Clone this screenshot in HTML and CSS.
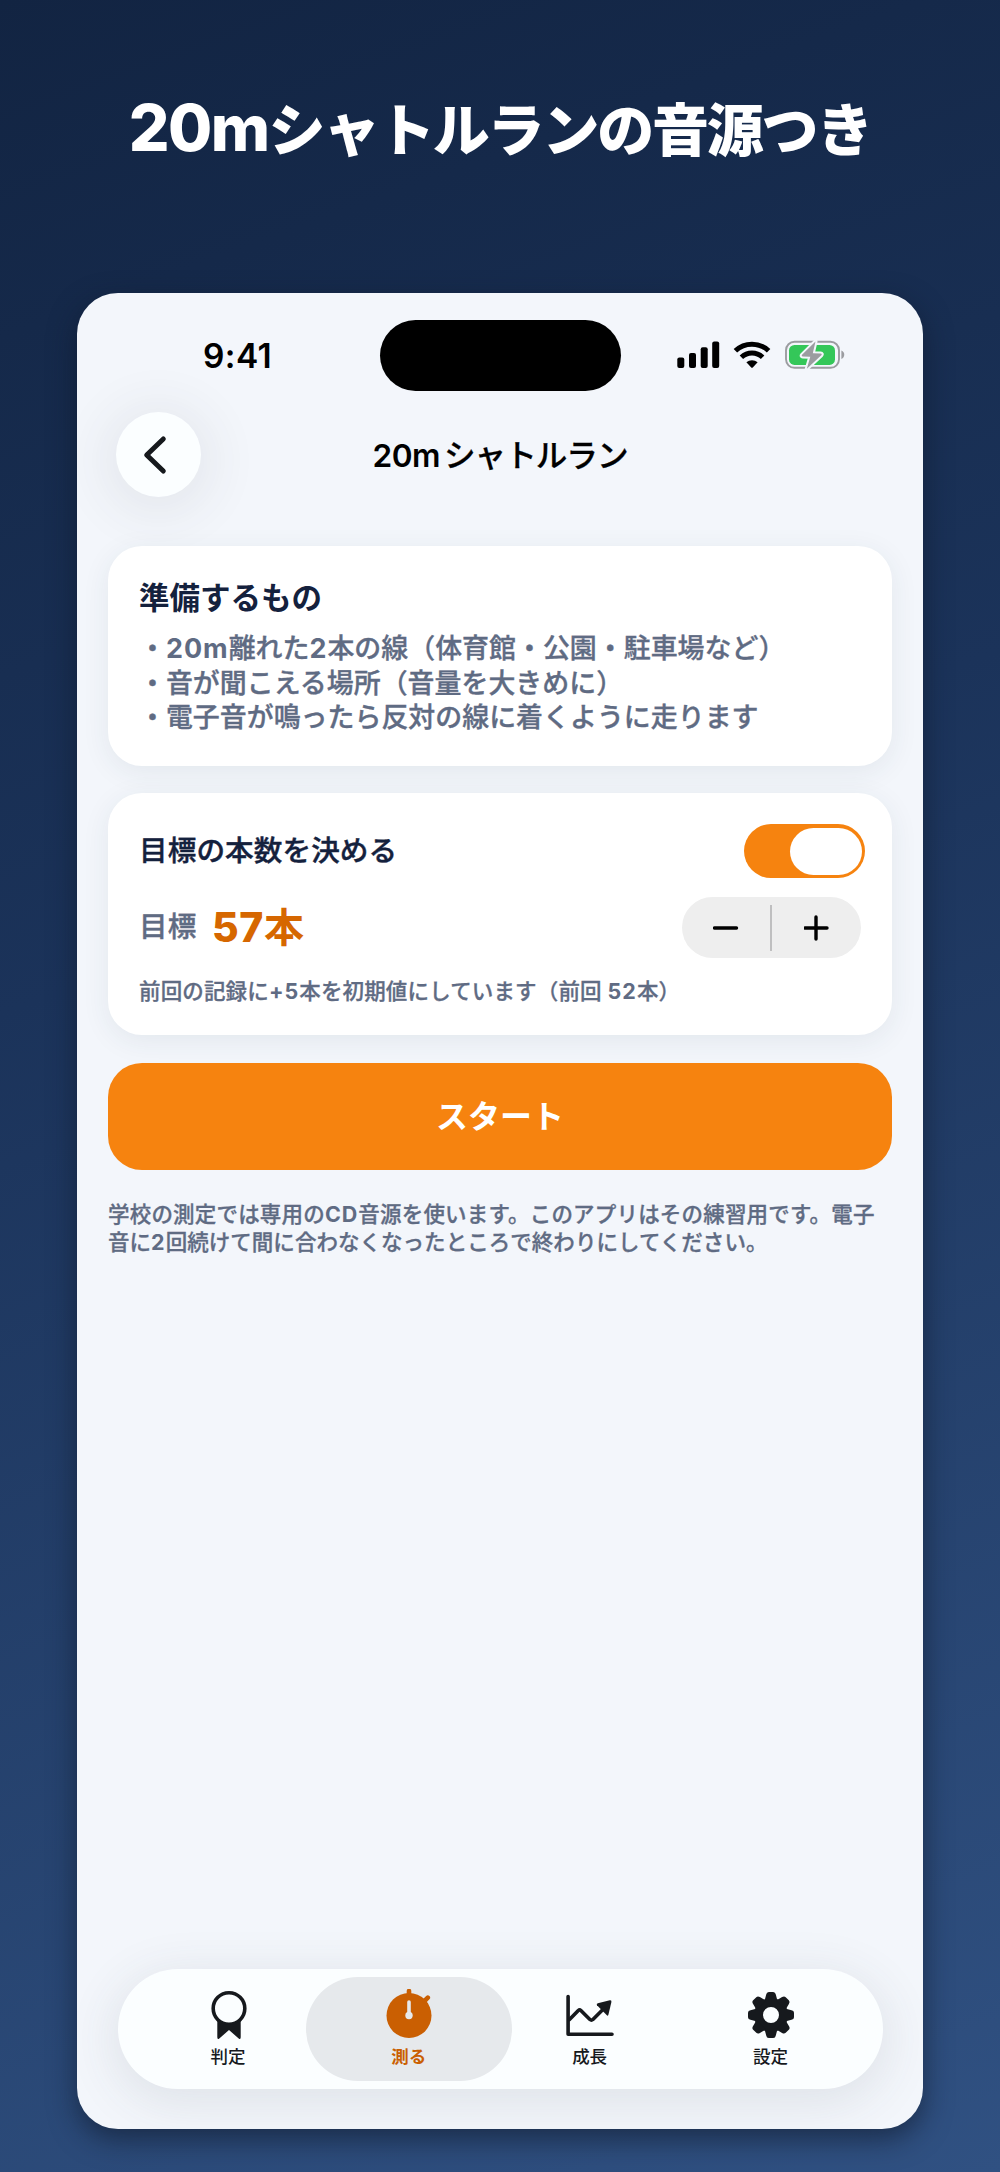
FILE: index.html
```html
<!DOCTYPE html>
<html lang="ja">
<head>
<meta charset="utf-8">
<title>20mシャトルラン</title>
<link rel="stylesheet" href="styles.css">
</head>
<body>
<main class="poster">
  <h1 class="headline"><span class="headline-latin">20m</span>シャトルランの音源つき</h1>
  <section class="screen">
    <div class="status">
      <div class="time">9:41</div>
      <div class="island"></div>
      <svg class="indicators" width="170" height="30" viewBox="0 0 170 30">
        <rect x="0.3" y="17.6" width="7" height="10.4" rx="2"/>
        <rect x="12" y="13" width="7" height="15" rx="2"/>
        <rect x="23.7" y="7.3" width="7" height="20.7" rx="2"/>
        <rect x="35.2" y="1.5" width="7" height="26.5" rx="2"/>
        <g fill="none" stroke="#000" stroke-width="5">
          <path d="M58.4 10.8a24 24 0 0 1 33.2 0"/>
          <path d="M64.4 17.3a15.4 15.4 0 0 1 21.2 0"/>
        </g>
        <path d="M69.4 22.3a8.4 8.4 0 0 1 11.2 0L75.8 27.4q-.8.8-1.6 0z"/>
        <rect x="109" y="1.8" width="53" height="26" rx="8.5" fill="none" stroke="#9b9ca0" stroke-width="1.9"/>
        <path d="M164.4 10.6c3.8 1.2 3.8 7.2 0 8.4z" fill="#9b9ca0"/>
        <rect x="112" y="4.9" width="46" height="20" rx="5.5" fill="#34c759"/>
        <path d="M138.5 1.5L125 14.8q-1 1.5.8 1.7l7.5.3-3.5 12 14.5-13.5q1.3-1.6-.8-1.8l-7.7-.3z" fill="#9b9ca0" stroke="#f3f6fb" stroke-width="4" paint-order="stroke" stroke-linejoin="round"/>
      </svg>
    </div>
    <header class="nav">
      <div class="back"><svg width="30" height="44" viewBox="0 0 30 44"><path d="M20.3 6L3.7 22l16.6 16" fill="none" stroke="#16191d" stroke-width="5" stroke-linecap="round" stroke-linejoin="round"/></svg></div>
      <h2 class="nav-title"><span class="nav-latin">20m</span>シャトルラン</h2>
    </header>
    <div class="content">
      <article class="card prep">
        <h3 class="prep-title">準備するもの</h3>
        <ul class="prep-list">
          <li>・<span class="latin">20m</span>離れた<span class="latin">2</span>本の線（体育館・公園・駐車場など）</li>
          <li>・音が聞こえる場所（音量を大きめに）</li>
          <li>・電子音が鳴ったら反対の線に着くように走ります</li>
        </ul>
      </article>
      <article class="card goal">
        <div class="row toggle-row">
          <span class="toggle-label">目標の本数を決める</span>
          <span class="toggle"><span class="knob"></span></span>
        </div>
        <div class="row value-row">
          <span class="value-label">目標</span>
          <span class="value"><span class="value-num">57</span>本</span>
          <span class="stepper">
            <svg width="26" height="26" viewBox="0 0 26 26"><path d="M1.5 13h22"/></svg>
            <span class="divider"></span>
            <svg width="26" height="26" viewBox="0 0 26 26"><path d="M1 13h22M12 2v22"/></svg>
          </span>
        </div>
        <p class="note">前回の記録に<span class="latin">+5</span>本を初期値にしています（前回 <span class="latin">52</span>本）</p>
      </article>
      <div class="start">スタート</div>
      <p class="footnote"><span class="footnote-line">学校の測定では専用の<span class="latin">CD</span>音源を使います。このアプリはその練習用です。電子</span><br>音に<span class="latin">2</span>回続けて間に合わなくなったところで終わりにしてください。</p>
    </div>
    <nav class="tabs">
      <div class="tab">
        <svg width="50" height="52" viewBox="0 0 50 52"><circle cx="26" cy="19.5" r="15.8" fill="none" stroke="#16191d" stroke-width="3.6"/><path d="M14.3 31.5q11.700 8.500 23.400 0v16.800q0 2.700-2 1.200L26 41l-9.700 8.500q-2 1.500-2-1.200z"/></svg>
        <span>判定</span>
      </div>
      <div class="tab active">
        <svg width="50" height="52" viewBox="0 0 50 52"><circle cx="25" cy="26.5" r="22.5"/><path d="M25 2v6M40.500 12l3.300-3.300" stroke="#ca5f02" stroke-width="4.600" stroke-linecap="round"/><path d="M25 13v11" stroke="#e6e9ec" stroke-width="3.600" stroke-linecap="round"/><circle cx="25" cy="26.500" r="3.700" fill="#e6e9ec"/></svg>
        <span>測る</span>
      </div>
      <div class="tab">
        <svg width="50" height="52" viewBox="0 0 50 52"><g fill="none" stroke="#16191d" stroke-width="3.600" stroke-linecap="round" stroke-linejoin="round"><path d="M3.100 7.500v37.800h43.900"/><path d="M4.500 30.500l8.800-9q1.300-1.200 2.600 0l9 9q1.500 1.300 3 0l12-12"/></g><path d="M32 16.200q-.9-1.500.8-2L44.800 11.300q2-.4 1.600 1.600l-3 12.900q-.6 1.500-1.800.3z"/></svg>
        <span>成長</span>
      </div>
      <div class="tab">
        <svg width="50" height="52" viewBox="0 0 50 52"><defs><path id="tooth" d="M19.500 12L21.200 5.500Q21.600 3 23.800 3H28.200Q30.400 3 30.800 5.500L32.500 12z"/></defs><circle cx="26" cy="26" r="12.500" fill="none" stroke="#16191d" stroke-width="9"/><use href="#tooth"/><use href="#tooth" transform="rotate(45 26 26)"/><use href="#tooth" transform="rotate(90 26 26)"/><use href="#tooth" transform="rotate(135 26 26)"/><use href="#tooth" transform="rotate(180 26 26)"/><use href="#tooth" transform="rotate(225 26 26)"/><use href="#tooth" transform="rotate(270 26 26)"/><use href="#tooth" transform="rotate(315 26 26)"/></svg>
        <span>設定</span>
      </div>
    </nav>
  </section>
</main>
</body>
</html>
```
FILE: styles.css
```css
* { box-sizing: border-box; margin: 0; padding: 0; }
body { font-family: Inter, "Noto Sans CJK JP", sans-serif; }
svg { display: block; flex: none; }
.poster {
  width: 1000px;
  height: 2172px;
  overflow: hidden;
  display: flex;
  flex-direction: column;
  align-items: center;
  background: linear-gradient(160deg, #122442 0%, #1b335a 40%, #305182 100%);
}
.headline {
  height: 293px;
  padding-top: 83px;
  line-height: 86px;
  font-family: "Noto Sans CJK JP", sans-serif;
  font-size: 57px;
  font-weight: 900;
  letter-spacing: -2.2px;
  color: #fff;
  white-space: nowrap;
}
.headline-latin { font-family: Inter, sans-serif; font-weight: 800; font-size: 64px; letter-spacing: -1.6px; }
.screen {
  width: 846px;
  height: 1836px;
  flex: none;
  border-radius: 41px;
  background: #f3f6fb;
  overflow: hidden;
  box-shadow: 0 10px 28px rgba(15, 24, 40, .6);
  display: flex;
  flex-direction: column;
}
.status { height: 98px; padding: 27px 0 0; display: grid; grid-template-columns: 303px 241px 1fr; }
.time { padding-left: 126px; font-size: 33.5px; font-weight: 600; line-height: 72px; letter-spacing: .4px; }
.island { height: 71px; border-radius: 36px; background: #000; }
.indicators { margin: 20px 0 0 56px; }
.nav { height: 155px; padding: 20.5px 38.5px 0; display: grid; grid-template-columns: 85px 1fr 85px; }
.back {
  width: 85px; height: 85px; border-radius: 50%; background: #fbfeff;
  display: flex; align-items: center; justify-content: center;
  box-shadow: 0 6px 50px 12px rgba(60, 65, 75, .08);
}
.back svg { margin: 1px 0 0; }
.nav-title { text-align: center; font-size: 31.6px; line-height: 87px; font-weight: 500; letter-spacing: -1px; white-space: nowrap; -webkit-text-stroke: .3px currentColor; }
.nav-latin { margin-right: 4px; font-weight: 600; letter-spacing: -.5px; -webkit-text-stroke: 0; }
.content { padding: 0 31px; display: flex; flex-direction: column; }
.card { background: #fff; border-radius: 34px; padding: 0 31px; box-shadow: 0 6px 28px rgba(40, 60, 80, .08); }
.latin { font-weight: 700; letter-spacing: 1px; -webkit-text-stroke: 0; }
.prep { height: 220px; padding-top: 30.5px; color: #5f6b83; }
.prep-title { font-size: 30.5px; line-height: 42px; font-weight: 700; color: #14213d; }
.prep-list { list-style: none; margin-top: 13.5px; font-size: 26.95px; line-height: 34.6px; font-weight: 500; white-space: nowrap; -webkit-text-stroke: .35px currentColor; }
.goal { height: 242px; margin-top: 27px; padding-top: 31px; }
.row { display: flex; align-items: center; }
.toggle-row { height: 54px; margin-right: -4px; justify-content: space-between; color: #14213d; }
.toggle-label, .value-label { font-size: 28.6px; font-weight: 500; -webkit-text-stroke: .4px currentColor; line-height: 42px; margin-bottom: 1px; letter-spacing: .1px; }
.toggle { width: 121px; height: 54px; border-radius: 27px; padding: 3.5px; background: #f6830f; display: flex; justify-content: flex-end; }
.knob { width: 71.5px; height: 47px; border-radius: 24px; background: #fff; }
.value-row { height: 61px; margin-top: 19px; }
.value-label { color: #5f6b83; }
.value { margin-left: 15.5px; font-size: 40px; font-weight: 700; line-height: 61px; color: #d66700; }
.value-num { font-size: 41px; font-weight: 800; letter-spacing: .6px; }
.stepper { width: 179px; height: 61px; margin-left: auto; border-radius: 31px; background: #eee; display: grid; grid-template-columns: 88px 2px 1fr; align-items: center; justify-items: center; }
.stepper svg { stroke: #000; stroke-width: 3.4; stroke-linecap: round; fill: none; }
.divider { width: 2px; height: 46px; background: #bfbfc0; }
.note { margin-top: 15.5px; font-size: 21.5px; line-height: 34px; font-weight: 500; color: #5f6b83; white-space: nowrap; letter-spacing: .15px; -webkit-text-stroke: .3px currentColor; }
.start { height: 107.5px; margin-top: 27.500px; border-radius: 34px; background: #f6830f; color: #fff; text-align: center; font-size: 32px; line-height: 108.5px; font-weight: 700; }
.footnote { margin-top: 29.500px; font-size: 21.5px; line-height: 28px; font-weight: 500; color: #5f6b83; white-space: nowrap; letter-spacing: .04px; -webkit-text-stroke: .3px currentColor; }
.footnote-line { letter-spacing: .19px; }
.tabs {
  width: 765px; height: 119.5px; margin: auto 0 40.5px 40.5px; padding: 8px 7.5px; border-radius: 60px; background: #fbfeff;
  display: flex;
  box-shadow: 0 10px 48px 6px rgba(60, 65, 75, .1);
}
.tab { width: 206px; height: 103.5px; flex: none; margin-right: -25.2px; border-radius: 52px; display: flex; flex-direction: column; align-items: center; color: #16191d; fill: #16191d; }
.tab:last-child { margin-right: 0; }
.tab svg { margin-top: 12px; }
.tab span { font-size: 17.5px; line-height: 24px; margin-top: 3.5px; font-weight: 500; }
.tab.active { background: #e6e9ec; color: #ca5f02; fill: #ca5f02; }
.tab.active span { font-weight: 700; }
```
